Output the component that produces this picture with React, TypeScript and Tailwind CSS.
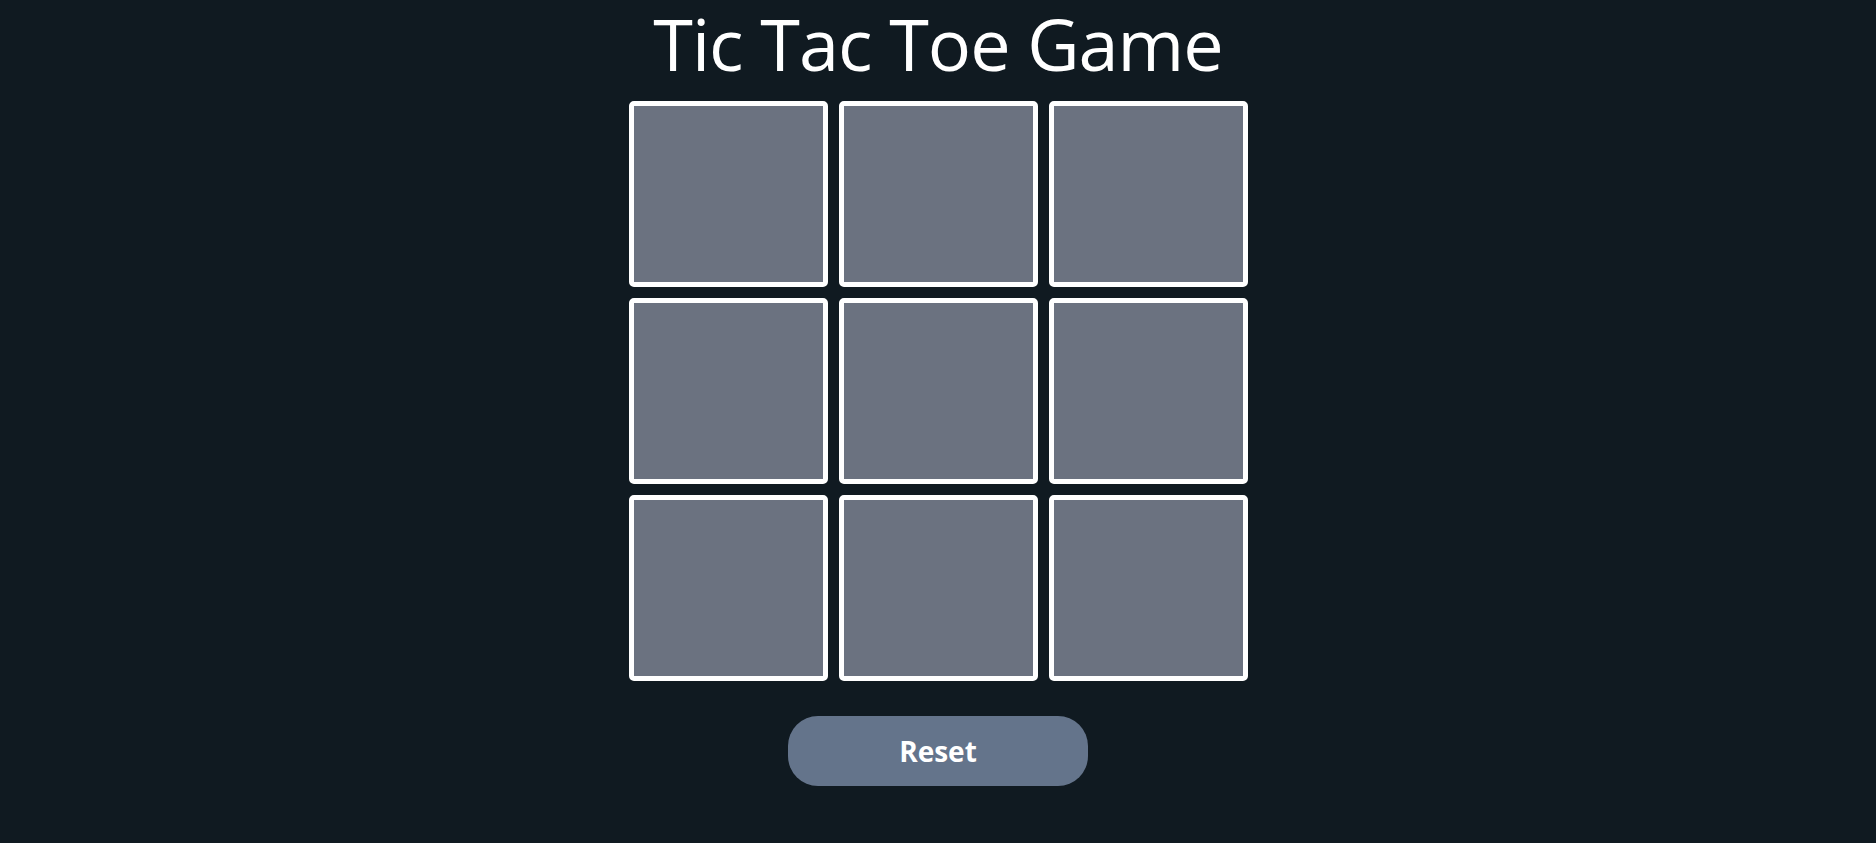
import React, { useState } from 'react';

export default function App() {
  const [board, setBoard] = useState<(string | null)[]>(Array(9).fill(null));
  const [xTurn, setXTurn] = useState(true);

  const handleClick = (i: number) => {
    if (board[i]) return;
    const next = board.slice();
    next[i] = xTurn ? 'X' : 'O';
    setBoard(next);
    setXTurn(!xTurn);
  };

  const reset = () => {
    setBoard(Array(9).fill(null));
    setXTurn(true);
  };

  return (
    <div
      className="min-h-screen w-full bg-[#101a21] flex flex-col items-center text-white"
      style={{ fontFamily: '"Open Sans", "Noto Sans", sans-serif' }}
    >
      <h1 className="text-[72px] leading-[84px] font-normal tracking-[-1px] pt-[1px]">Tic Tac Toe Game</h1>

      <div className="grid grid-cols-[199px_199px_199px] gap-x-[11px] gap-y-[11px] mt-[16px]">
        {board.map((cell, i) => (
          <button
            key={i}
            onClick={() => handleClick(i)}
            className="w-[199px] h-[186px] bg-[#6b7280] border-[5px] border-white rounded-[5px] text-7xl font-bold text-white flex items-center justify-center"
          >
            {cell}
          </button>
        ))}
      </div>

      <button
        onClick={reset}
        className="mt-[35px] w-[300px] h-[70px] rounded-[30px] bg-[#64748b] text-white text-[28px] font-bold"
      >
        Reset
      </button>
    </div>
  );
}
